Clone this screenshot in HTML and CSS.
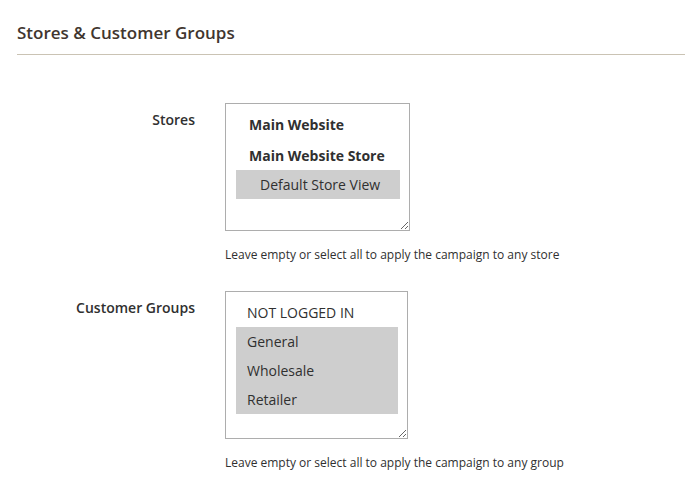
FILE: index.html
```html
<!DOCTYPE html>
<html lang="en">
<head>
<meta charset="utf-8">
<title>Stores &amp; Customer Groups</title>
<link rel="stylesheet" href="styles.css">
</head>
<body>
<div class="section">
  <div class="section-title">Stores &amp; Customer Groups</div>
  <div class="fields">
    <div class="field field-stores">
      <div class="label">Stores</div>
      <div class="control">
        <div class="multiselect ms-stores">
          <div class="opt group first">Main Website</div>
          <div class="opt group">Main Website Store</div>
          <div class="opt nested selected">Default Store View</div>
        </div>
        <div class="note">Leave empty or select all to apply the campaign to any store</div>
      </div>
    </div>
    <div class="field field-groups">
      <div class="label">Customer Groups</div>
      <div class="control">
        <div class="multiselect ms-groups">
          <div class="opt">NOT LOGGED IN</div>
          <div class="opt selected">General</div>
          <div class="opt selected">Wholesale</div>
          <div class="opt selected">Retailer</div>
        </div>
        <div class="note">Leave empty or select all to apply the campaign to any group</div>
      </div>
    </div>
  </div>
</div>
</body>
</html>
```
FILE: styles.css
```css
html, body {
  margin: 0;
  padding: 0;
  background: #ffffff;
}
body {
  font-family: "Open Sans", "Liberation Sans", sans-serif;
  color: #303030;
}
.section {
  padding-left: 17px;
}
.section-title {
  margin-top: 22px;
  font-size: 17px;
  line-height: 22px;
  font-weight: 600;
  color: #41362f;
  padding-bottom: 10px;
  border-bottom: 1px solid #cac3b4;
}
.fields {
  padding-top: 48px;
  display: flex;
  flex-direction: column;
  gap: 28px;
}
.field {
  display: grid;
  grid-template-columns: 178px auto;
  column-gap: 30px;
}
.label {
  text-align: right;
  font-size: 14px;
  font-weight: 600;
  line-height: 20px;
  padding-top: 7px;
  color: #303030;
}
.control {
  display: flex;
  flex-direction: column;
  align-items: flex-start;
}
.multiselect {
  box-sizing: border-box;
  border: 1px solid #adadad;
  background: #fff;
  padding: 7px 9px 0 10px;
  overflow: auto;
  resize: both;
  font-size: 14px;
}
.ms-stores {
  width: 185px;
  height: 128px;
}
.ms-groups {
  width: 183px;
  height: 148px;
  padding-top: 6px;
}
.opt {
  height: 29px;
  line-height: 29px;
  padding-left: 11px;
  white-space: nowrap;
}
.opt.group {
  font-weight: 700;
  padding-left: 13px;
}
.opt.group.first {
  height: 30px;
  line-height: 28px;
}
.opt.nested {
  padding-left: 24px;
}
.opt.selected {
  background: #cecece;
}
.note {
  margin-top: 16px;
  font-size: 12px;
  line-height: 16px;
  color: #303030;
  white-space: nowrap;
}
```
